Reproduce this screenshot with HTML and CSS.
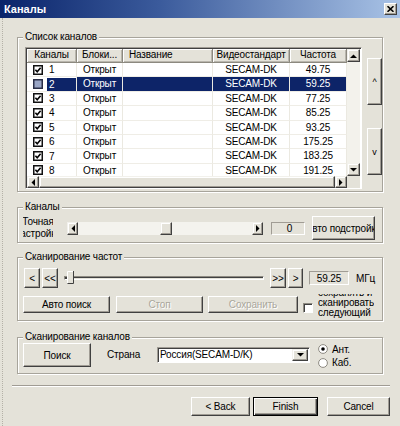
FILE: index.html
```html
<!DOCTYPE html>
<html lang="ru">
<head>
<meta charset="utf-8">
<title>Каналы</title>
<link rel="stylesheet" href="styles.css">
</head>
<body>
<div class="window">
  <div class="titlebar">
    <span class="title">Каналы</span>
    <span class="close"><svg width="7" height="6" viewBox="0 0 7 6"><path d="M0.5 0.2 L6.5 5.8 M6.5 0.2 L0.5 5.8" stroke="#000" stroke-width="1.6"/></svg></span>
  </div>
  <div class="body">
    <div class="group g1">
      <span class="glabel">Список каналов</span>
      <div class="listview">
        <div class="lv-main">
          <div class="lv-head">
            <div class="hc">Каналы</div>
            <div class="hc">Блоки...</div>
            <div class="hc left">Название</div>
            <div class="hc">Видеостандарт</div>
            <div class="hc">Частота</div>
          </div>
          <div class="lv-rows">
            <div class="row"><div class="c first"><svg class="cb" width="10" height="10" viewBox="0 0 10 10"><rect x="0.75" y="0.75" width="8.5" height="8.5" fill="#fff" stroke="#111" stroke-width="1.5"/><path d="M2.4 4.8 L4.2 6.7 L7.6 2.8" fill="none" stroke="#000" stroke-width="1.6"/></svg><span class="num">1</span></div><div class="c">Открыт</div><div class="c"></div><div class="c">SECAM-DK</div><div class="c">49.75</div></div>
            <div class="row sel"><div class="c first"><svg class="cb" width="10" height="10" viewBox="0 0 10 10"><rect x="0.75" y="0.75" width="8.5" height="8.5" fill="#9aa6c6" stroke="#2a2f48" stroke-width="1.5"/></svg><span class="num">2</span></div><div class="c">Открыт</div><div class="c"></div><div class="c">SECAM-DK</div><div class="c">59.25</div></div>
            <div class="row"><div class="c first"><svg class="cb" width="10" height="10" viewBox="0 0 10 10"><rect x="0.75" y="0.75" width="8.5" height="8.5" fill="#fff" stroke="#111" stroke-width="1.5"/><path d="M2.4 4.8 L4.2 6.7 L7.6 2.8" fill="none" stroke="#000" stroke-width="1.6"/></svg><span class="num">3</span></div><div class="c">Открыт</div><div class="c"></div><div class="c">SECAM-DK</div><div class="c">77.25</div></div>
            <div class="row"><div class="c first"><svg class="cb" width="10" height="10" viewBox="0 0 10 10"><rect x="0.75" y="0.75" width="8.5" height="8.5" fill="#fff" stroke="#111" stroke-width="1.5"/><path d="M2.4 4.8 L4.2 6.7 L7.6 2.8" fill="none" stroke="#000" stroke-width="1.6"/></svg><span class="num">4</span></div><div class="c">Открыт</div><div class="c"></div><div class="c">SECAM-DK</div><div class="c">85.25</div></div>
            <div class="row"><div class="c first"><svg class="cb" width="10" height="10" viewBox="0 0 10 10"><rect x="0.75" y="0.75" width="8.5" height="8.5" fill="#fff" stroke="#111" stroke-width="1.5"/><path d="M2.4 4.8 L4.2 6.7 L7.6 2.8" fill="none" stroke="#000" stroke-width="1.6"/></svg><span class="num">5</span></div><div class="c">Открыт</div><div class="c"></div><div class="c">SECAM-DK</div><div class="c">93.25</div></div>
            <div class="row"><div class="c first"><svg class="cb" width="10" height="10" viewBox="0 0 10 10"><rect x="0.75" y="0.75" width="8.5" height="8.5" fill="#fff" stroke="#111" stroke-width="1.5"/><path d="M2.4 4.8 L4.2 6.7 L7.6 2.8" fill="none" stroke="#000" stroke-width="1.6"/></svg><span class="num">6</span></div><div class="c">Открыт</div><div class="c"></div><div class="c">SECAM-DK</div><div class="c">175.25</div></div>
            <div class="row"><div class="c first"><svg class="cb" width="10" height="10" viewBox="0 0 10 10"><rect x="0.75" y="0.75" width="8.5" height="8.5" fill="#fff" stroke="#111" stroke-width="1.5"/><path d="M2.4 4.8 L4.2 6.7 L7.6 2.8" fill="none" stroke="#000" stroke-width="1.6"/></svg><span class="num">7</span></div><div class="c">Открыт</div><div class="c"></div><div class="c">SECAM-DK</div><div class="c">183.25</div></div>
            <div class="row"><div class="c first"><svg class="cb" width="10" height="10" viewBox="0 0 10 10"><rect x="0.75" y="0.75" width="8.5" height="8.5" fill="#fff" stroke="#111" stroke-width="1.5"/><path d="M2.4 4.8 L4.2 6.7 L7.6 2.8" fill="none" stroke="#000" stroke-width="1.6"/></svg><span class="num">8</span></div><div class="c">Открыт</div><div class="c"></div><div class="c">SECAM-DK</div><div class="c">191.25</div></div>
          </div>
        </div>
        <div class="vscroll">
          <div class="sbtn"><svg width="7" height="4" viewBox="0 0 7 4"><polygon points="0,4 3.5,0.5 7,4" fill="#000"/></svg></div>
          <div class="vtrack"></div>
          <div class="sbtn"><svg width="7" height="4" viewBox="0 0 7 4"><polygon points="0,0 7,0 3.5,3.5" fill="#000"/></svg></div>
        </div>
        <div class="hscroll">
          <div class="sbtn"><svg width="4" height="7" viewBox="0 0 4 7"><polygon points="4,0 4,7 0.5,3.5" fill="#000"/></svg></div>
          <div class="hthumb"></div>
          <div class="sbtn"><svg width="4" height="7" viewBox="0 0 4 7"><polygon points="0,0 0,7 3.5,3.5" fill="#000"/></svg></div>
        </div>
        <div class="corner"></div>
      </div>
      <div class="updown">
        <div class="btn ud">^</div>
        <div class="btn ud">v</div>
      </div>
    </div>

    <div class="group g2">
      <span class="glabel">Каналы</span>
      <div class="g2row">
        <div class="fine"><span>Точная</span><span>настройка</span></div>
        <div class="slider">
          <div class="sbtn"><svg width="4" height="7" viewBox="0 0 4 7"><polygon points="4,0 4,7 0.5,3.5" fill="#000"/></svg></div>
          <div class="strack"><div class="spad a"></div><div class="sthumb"></div><div class="spad b"></div></div>
          <div class="sbtn"><svg width="4" height="7" viewBox="0 0 4 7"><polygon points="0,0 0,7 3.5,3.5" fill="#000"/></svg></div>
        </div>
        <div class="edit ro zero">0</div>
        <div class="btn clip autotune"><span>Авто подстройка</span></div>
      </div>
    </div>

    <div class="group g3">
      <span class="glabel">Сканирование частот</span>
      <div class="g3row1">
        <div class="btn small">&lt;</div>
        <div class="btn small">&lt;&lt;</div>
        <div class="trackbar">
          <div class="groove"></div>
          <svg class="tthumb" width="9" height="14" viewBox="0 0 9 14"><path d="M0 8.5 H2" stroke="#404040" stroke-width="1"/><path d="M2.5 13 V1.5 H8" fill="none" stroke="#fff" stroke-width="1"/><path d="M2.5 13.5 H8.5 V1" fill="none" stroke="#404040" stroke-width="1"/><rect x="3" y="2" width="5" height="11" fill="#e4e2d9"/></svg>
        </div>
        <div class="btn small">&gt;&gt;</div>
        <div class="btn small s2">&gt;</div>
        <div class="edit ro freq">59.25</div>
        <span class="unit">МГц</span>
      </div>
      <div class="g3row2">
        <div class="btn b87">Авто поиск</div>
        <div class="btn b87 dis">Стоп</div>
        <div class="btn b90 dis">Сохранить</div>
        <div class="chk"></div>
        <div class="cblabel"><span>сохранять и</span><span>сканировать</span><span>следующий</span></div>
      </div>
    </div>

    <div class="group g4">
      <span class="glabel">Сканирование каналов</span>
      <div class="g4row">
        <div class="btn search">Поиск</div>
        <span class="country">Страна</span>
        <div class="combo">
          <span class="ctext">Россия(SECAM-D/K)</span>
          <div class="cbtn"><svg width="7" height="4" viewBox="0 0 7 4"><polygon points="0,0 7,0 3.5,3.5" fill="#000"/></svg></div>
        </div>
        <div class="radios">
          <div class="radio"><svg width="10" height="10" viewBox="0 0 10 10"><circle cx="5" cy="5" r="4.4" fill="#fff" stroke="#8d8a82" stroke-width="1"/><circle cx="5" cy="5" r="1.8" fill="#000"/></svg><span>Ант.</span></div>
          <div class="radio"><svg width="10" height="10" viewBox="0 0 10 10"><circle cx="5" cy="5" r="4.4" fill="#fff" stroke="#8d8a82" stroke-width="1"/></svg><span>Каб.</span></div>
        </div>
      </div>
    </div>

    <div class="sep"></div>

    <div class="footer">
      <div class="btn fb back">&lt; Back</div>
      <div class="btn fb finish">Finish</div>
      <div class="btn fb cancel">Cancel</div>
    </div>
  </div>
</div>
</body>
</html>
```
FILE: styles.css
```css
* { box-sizing: border-box; margin: 0; padding: 0; }
html, body { width: 400px; height: 426px; overflow: hidden; }
body {
  background: #e4e2d9;
  font-family: "Liberation Sans", Arial, sans-serif;
  font-size: 10px;
  color: #000;
  letter-spacing: -0.15px;
}
.window { width: 400px; height: 426px; display: flex; flex-direction: column; }

.titlebar {
  height: 18px; flex: none;
  background: linear-gradient(90deg, #0a246a 0%, #3b5b9c 40%, #a9c3e6 100%);
  display: flex; align-items: center; justify-content: space-between;
  padding: 0 3px 0 4px;
}
.title { color: #fff; font-weight: bold; font-size: 11px; letter-spacing: 0; }
.close {
  width: 13px; height: 12px; background: #e4e2d9;
  border: 1px solid; border-color: #fff #404040 #404040 #fff;
  box-shadow: inset -1px -1px 0 #a09c94;
  display: flex; align-items: center; justify-content: center;
}

.body {
  flex: 1; margin-left: 2px; border-left: 1px dotted #b4b1a7;
  padding: 0 17px 0 14px; display: flex; flex-direction: column;
}

.group {
  position: relative; flex: none;
  border: 1px solid #a7a49b;
  box-shadow: inset 1px 1px 0 #fff, 1px 1px 0 #fff;
}
.glabel {
  position: absolute; top: -7px; left: 5px;
  padding: 0 2px 0 2px; background: #e4e2d9; line-height: 12px; white-space: nowrap;
}

/* buttons */
.btn {
  background: #e4e2d9;
  border: 1px solid; border-color: #fff #404040 #404040 #fff;
  box-shadow: inset -1px -1px 0 #a09c94;
  display: flex; align-items: center; justify-content: center;
  white-space: nowrap;
}
.btn.dis { color: #aaa79c; text-shadow: 1px 1px 0 #fff; }
.btn.clip { overflow: hidden; }
.sbtn {
  flex: none; background: #e4e2d9;
  border: 1px solid; border-color: #f2f1ec #404040 #404040 #f2f1ec;
  box-shadow: inset -1px -1px 0 #a09c94, inset 1px 1px 0 #fff;
  display: flex; align-items: center; justify-content: center;
}

/* group 1 */
.g1 { margin-top: 19px; height: 155px; display: flex; padding: 9px 0 0 7px; gap: 5px; }
.listview {
  width: 337px; height: 142px; flex: none;
  border: 1px solid; border-color: #a09c94 #fff #fff #a09c94;
  box-shadow: inset 1px 1px 0 #404040;
  background: #fff; padding: 1px 1px 0 1px;
  display: grid; grid-template-columns: 320px 13px; grid-template-rows: 127px 12px;
}
.lv-main { overflow: hidden; display: flex; flex-direction: column; }
.lv-head { display: grid; grid-template-columns: 50px 46px 90px 77px 57px; height: 14px; flex: none; }
.hc {
  background: #e4e2d9; line-height: 12px; text-align: center; white-space: nowrap; overflow: hidden;
  border-right: 1px solid #8c897f; border-bottom: 1px solid #8c897f;
  box-shadow: inset 1px 1px 0 #fff, inset -1px -1px 0 #b9b6ad;
}
.hc.left { text-align: left; padding-left: 6px; }
.lv-rows { flex: 1; overflow: hidden; }
.row { display: grid; grid-template-columns: 50px 46px 90px 77px 57px; height: 14.4px; }
.c {
  line-height: 13px; text-align: center; white-space: nowrap; overflow: hidden;
  border-right: 1px solid #ebe9e1; border-bottom: 1px solid #efede6;
}
.c.first { display: flex; align-items: center; padding-left: 6px; text-align: left; }
.cb { flex: none; }
.num { flex: 1; margin-left: 4px; padding-left: 2px; height: 13px; line-height: 13px; }
.row.sel .c { color: #fff; background: #0d2468; }
.row.sel .c.first { background: #fff; color: #000; }
.row.sel .num { background: #0d2468; color: #fff; }

.vscroll { display: flex; flex-direction: column; }
.vscroll .sbtn { height: 13px; }
.vtrack { flex: 1; background: #f3f2ec; }
.hscroll { display: flex; }
.hscroll .sbtn { width: 12px; }
.hthumb {
  flex: 1; background: #e4e2d9;
  border: 1px solid; border-color: #f2f1ec #404040 #404040 #f2f1ec;
  box-shadow: inset -1px -1px 0 #a09c94, inset 1px 1px 0 #fff;
}
.corner { background: #e4e2d9; }

.updown { display: flex; flex-direction: column; gap: 23px; padding-top: 11px; }
.ud { width: 15px; height: 47px; font-size: 9px; }

/* group 2 */
.g2 { margin-top: 15px; height: 36px; padding: 8px 0 0 5px; }
.g2row { display: flex; align-items: center; height: 24px; }
.fine {
  width: 30px; height: 24px; overflow: hidden; flex: none;
  display: flex; flex-direction: column; align-items: center; justify-content: center;
  line-height: 12px; white-space: nowrap;
}
.slider { margin-left: 14px; width: 196px; height: 13px; display: flex; flex: none; }
.slider .sbtn { width: 11px; }
.strack { flex: 1; display: flex; background: #f4f3ee; }
.spad.a { width: 82px; }
.sthumb {
  width: 12px; background: #e4e2d9;
  border: 1px solid; border-color: #f2f1ec #404040 #404040 #f2f1ec;
  box-shadow: inset -1px -1px 0 #a09c94, inset 1px 1px 0 #fff;
}
.spad.b { flex: 1; }
.edit.ro {
  background: #e4e2d9;
  border: 1px solid; border-color: #a09c94 #fff #fff #a09c94;
  display: flex; align-items: center; justify-content: center; flex: none;
}
.zero { margin-left: 8px; width: 34px; height: 13px; padding-left: 3px; }
.autotune { margin-left: 7px; width: 63px; height: 24px; flex: none; }

/* group 3 */
.g3 { margin-top: 14px; height: 64px; padding: 10px 0 0 5px; }
.g3row1 { display: flex; align-items: center; height: 20px; margin-left: 1px; }
.small { width: 16px; height: 20px; flex: none; margin-right: 2px; font-size: 10px; }
.small.s2 { width: 15px; margin-right: 0; }
.trackbar { position: relative; width: 208px; height: 20px; flex: none; display: flex; align-items: center; padding: 0 4px 0 4px; margin-right: 2px; }
.groove {
  flex: 1; height: 4px; margin-top: -1px;
  border: 1px solid; border-color: #8e8b82 #fff #fff #8e8b82;
  box-shadow: inset 1px 1px 0 #404040;
}
.tthumb { position: absolute; left: 5px; top: 2px; }
.freq { margin-left: 6px; width: 40px; height: 14px; }
.unit { margin-left: 7px; }
.g3row2 { display: flex; align-items: flex-start; margin-top: 8px; height: 17px; }
.b87 { width: 87px; height: 17px; flex: none; margin-right: 6px; }
.b87.dis { margin-right: 5px; }
.b90 { width: 90px; height: 17px; flex: none; margin-right: 5px; }
.chk {
  width: 10px; height: 10px; margin-top: 7px; flex: none; background: #fff;
  border: 1px solid; border-color: #8e8b82 #fff #fff #8e8b82;
  box-shadow: inset 1px 1px 0 #404040;
}
.cblabel {
  margin-left: 5px; margin-top: -2px; height: 24px; overflow: hidden;
  display: flex; flex-direction: column; justify-content: flex-end;
  line-height: 10px; white-space: nowrap;
}

/* group 4 */
.g4 { margin-top: 16px; height: 37px; padding: 5px 0 0 5px; }
.g4row { display: flex; align-items: flex-start; }
.search { width: 68px; height: 24px; flex: none; }
.country { margin-left: 16px; width: 50px; line-height: 24px; flex: none; }
.combo {
  width: 153px; height: 16px; margin-top: 4px; flex: none; background: #fff;
  border: 1px solid; border-color: #a09c94 #fff #fff #a09c94;
  box-shadow: inset 1px 1px 0 #404040;
  display: flex; align-items: center; padding: 1px 1px 1px 2px;
}
.ctext { flex: 1; white-space: nowrap; line-height: 12px; }
.cbtn {
  width: 16px; height: 12px; background: #e4e2d9;
  border: 1px solid; border-color: #f2f1ec #404040 #404040 #f2f1ec;
  box-shadow: inset -1px -1px 0 #a09c94, inset 1px 1px 0 #fff;
  display: flex; align-items: center; justify-content: center;
}
.radios { margin-left: 8px; display: flex; flex-direction: column; gap: 1.5px; }
.radio { display: flex; align-items: center; height: 12px; gap: 4px; }

/* footer */
.sep { margin: 11px -7px 0 -5px; border-top: 1px solid #a09c94; border-bottom: 1px solid #fff; height: 2px; }
.footer { display: flex; justify-content: flex-end; margin: 10px -7px 0 0; }
.fb { height: 19px; }
.back { width: 59px; margin-right: 3px; }
.finish {
  width: 65px; margin-right: 9px;
  border: 1px solid #000;
  box-shadow: inset 1px 1px 0 #fff, inset -1px -1px 0 #404040, inset -2px -2px 0 #a09c94;
}
.cancel { width: 63px; }
```
